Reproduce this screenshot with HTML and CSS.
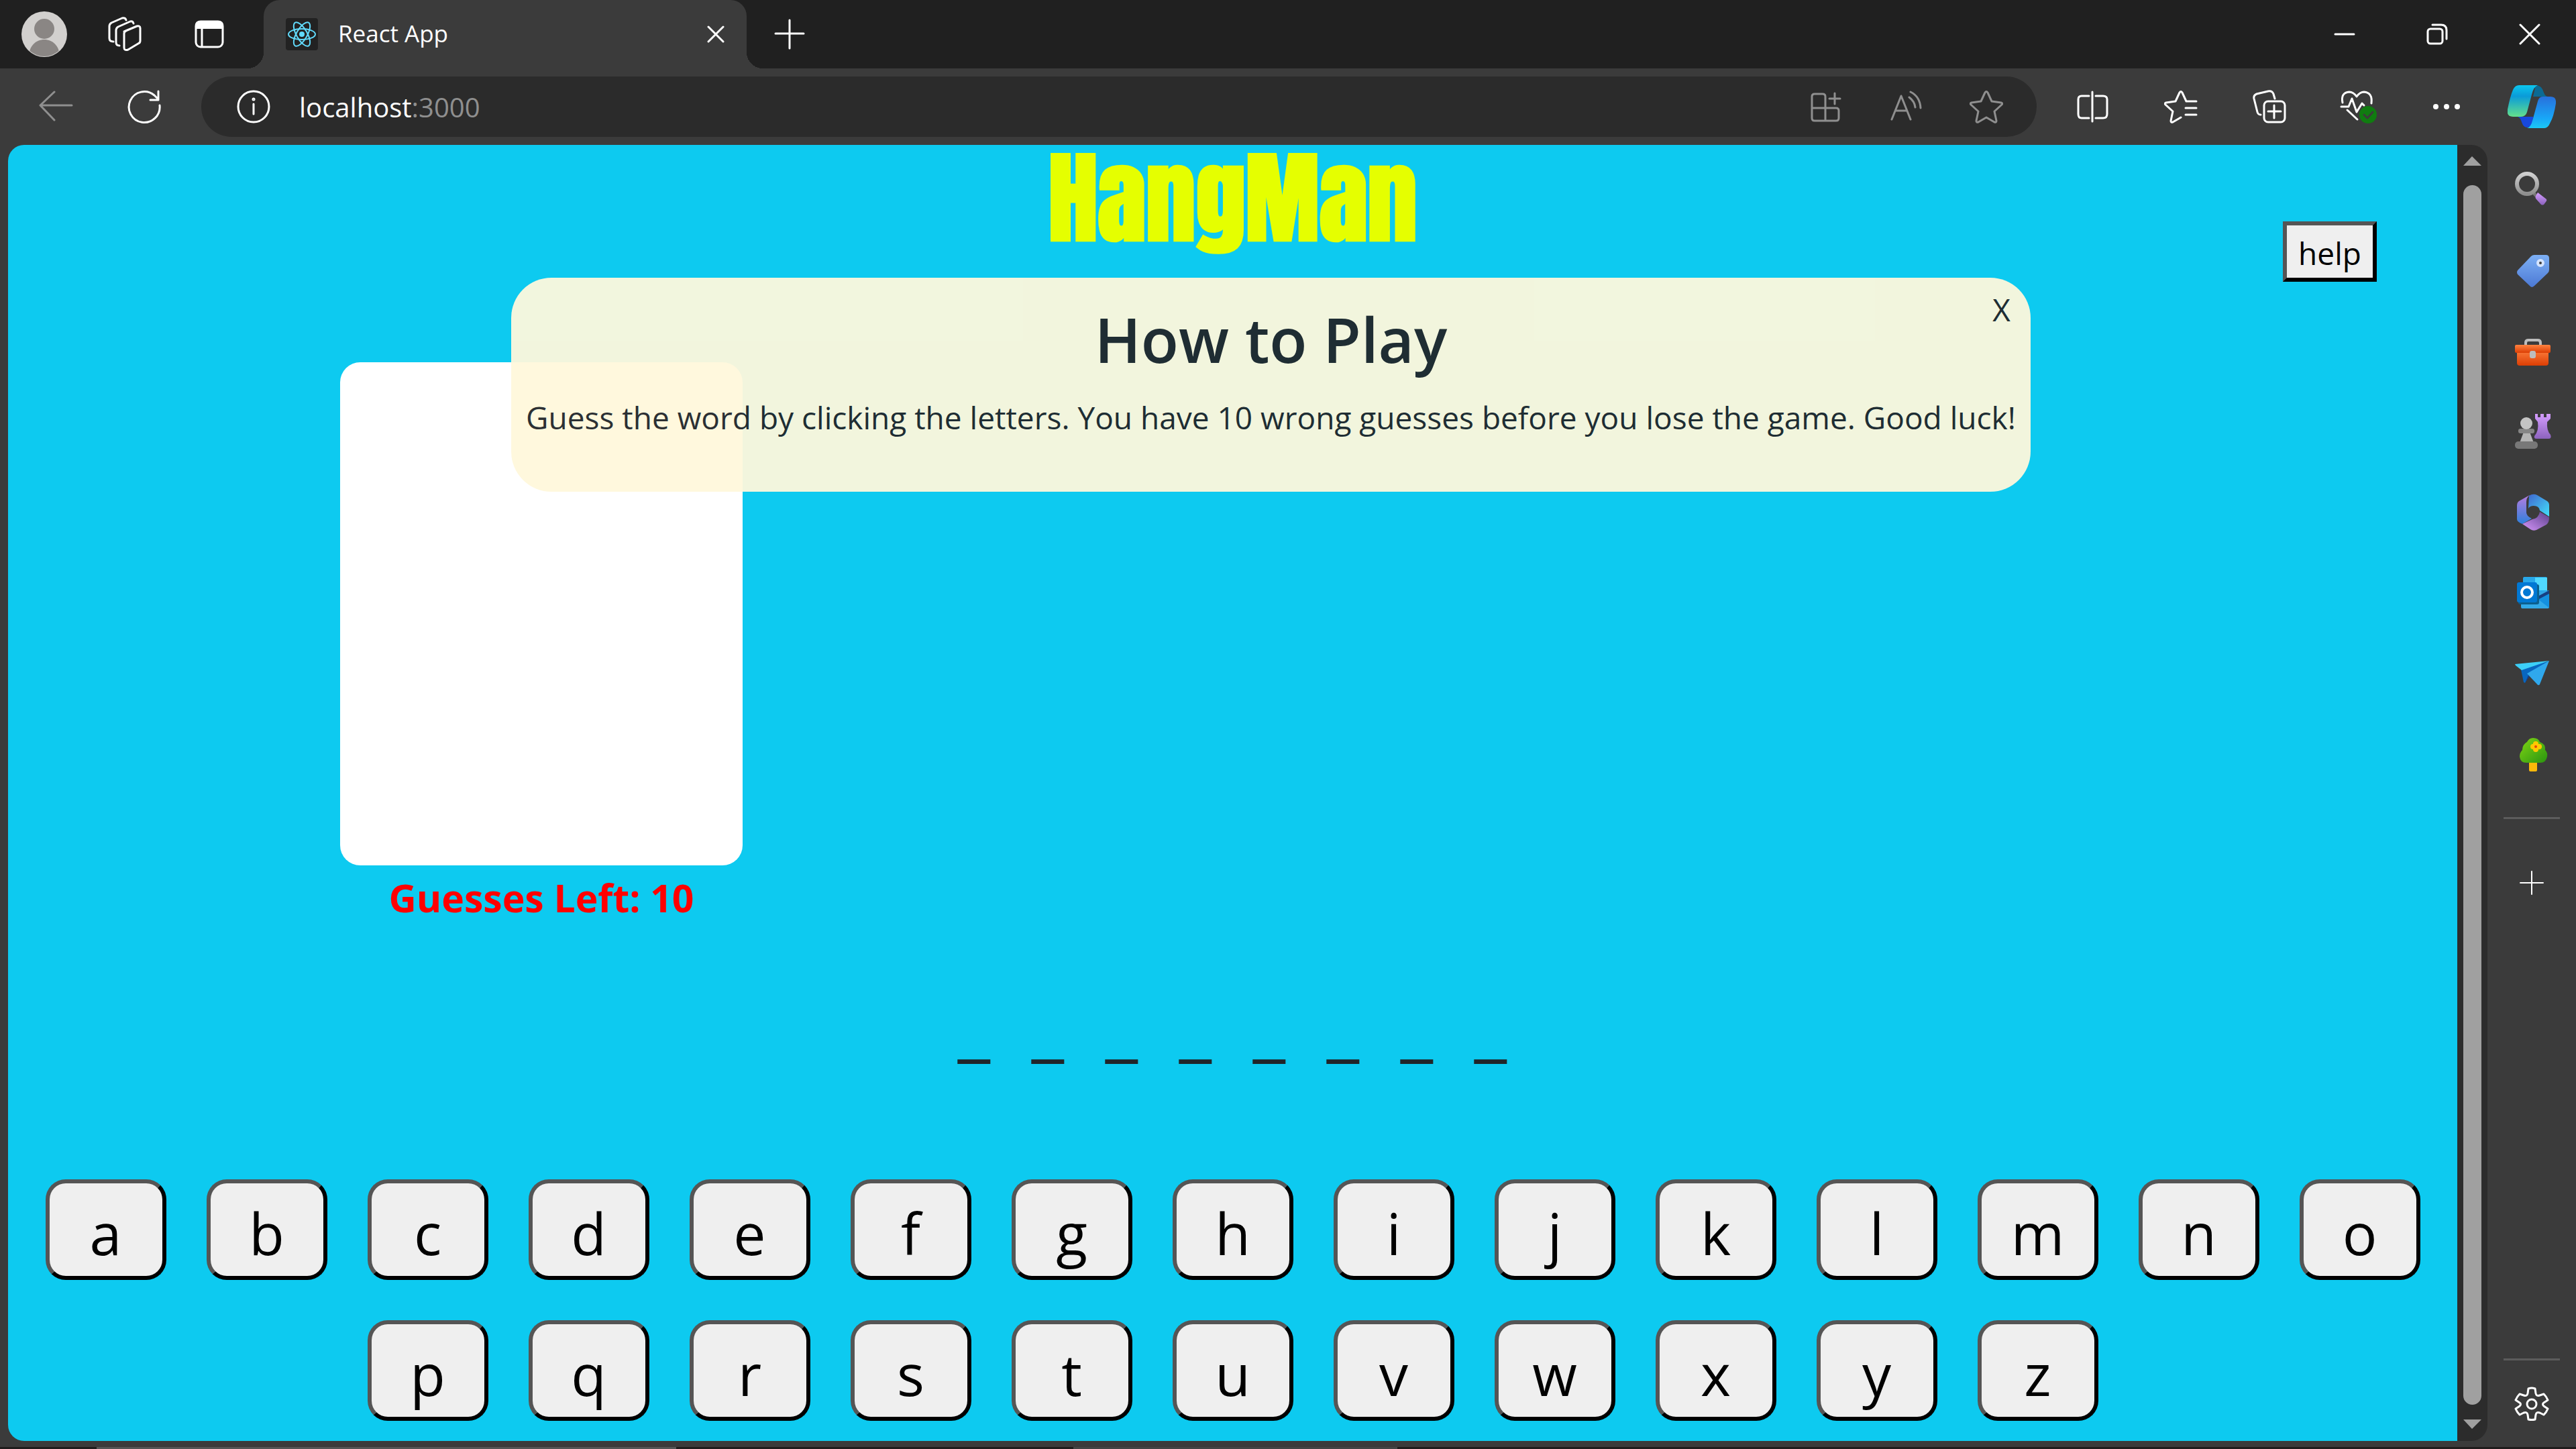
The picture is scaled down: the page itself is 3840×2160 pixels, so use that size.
FILE: index.html
```
<!DOCTYPE html>
<html lang="en">
<head>
<meta charset="utf-8">
<title>React App</title>
<link rel="stylesheet" href="styles.css">
</head>
<body>
<div class="browser">
  <header class="tabstrip">
    <div class="strip-tools">
      <button class="icon-btn" aria-label="Profile">
        <svg width="68" height="68" viewBox="0 0 68 68"><defs><clipPath id="av"><circle cx="34" cy="34" r="33"/></clipPath></defs><circle cx="34" cy="34" r="34" fill="#d2d0ce"/><g clip-path="url(#av)" fill="#8a8684"><circle cx="34" cy="26" r="15"/><path d="M11 68c0-16 10-26 23-26s23 10 23 26z"/></g></svg>
      </button>
      <button class="icon-btn" aria-label="Workspaces">
        <svg class="ic" width="52" height="52" viewBox="0 0 52 52"><path d="M25 22l19-8q5-1 5 3v19q0 3-3 4l-15 9q-6 2-6-3V25q0-3 3-4z"/><path d="M18 43q-5 0-5-5V20q0-3 3-5l18-8q4-1 5 3"/><path d="M9 37q-6 0-6-5V14q0-3 3-5l16-7q5-1 6 3"/></svg>
      </button>
      <button class="icon-btn" aria-label="Tab actions">
        <svg width="48" height="48" viewBox="0 0 48 48"><rect x="4" y="5" width="40" height="38" rx="7" fill="none" stroke="#fff" stroke-width="3"/><path d="M3 16v-5q0-7 7-7h28q7 0 7 7v5z" fill="#fff"/><path d="M13 16v27" stroke="#fff" stroke-width="3"/></svg>
      </button>
    </div>
    <div class="tab">
      <svg width="48" height="48" viewBox="0 0 48 48"><rect width="48" height="48" rx="4" fill="#222"/><g fill="none" stroke="#61dafb" stroke-width="2"><ellipse cx="24" cy="24" rx="20" ry="8"/><ellipse cx="24" cy="24" rx="20" ry="8" transform="rotate(60 24 24)"/><ellipse cx="24" cy="24" rx="20" ry="8" transform="rotate(120 24 24)"/></g><circle cx="24" cy="24" r="4" fill="#61dafb"/></svg>
      <span class="tab-title">React App</span>
      <button class="icon-btn" aria-label="Close tab"><svg class="ic" width="26" height="26" viewBox="0 0 26 26"><path d="M2 2l22 22M24 2L2 24"/></svg></button>
    </div>
    <button class="icon-btn new-tab" aria-label="New tab"><svg class="ic" width="48" height="48" viewBox="0 0 48 48"><path d="M24 3v42M3 23h42"/></svg></button>
    <div class="window-controls">
      <button class="icon-btn" aria-label="Minimize"><svg class="ic" width="32" height="32" viewBox="0 0 32 32"><path d="M2 16h28"/></svg></button>
      <button class="icon-btn" aria-label="Restore"><svg class="ic" width="32" height="32" viewBox="0 0 32 32"><rect x="2" y="8" width="22" height="22" rx="4"/><path d="M9 2h13q8 0 8 8v13"/></svg></button>
      <button class="icon-btn" aria-label="Close"><svg class="ic" width="32" height="32" viewBox="0 0 32 32"><path d="M2 2l28 28M30 2L2 30"/></svg></button>
    </div>
  </header>

  <nav class="toolbar">
    <div class="nav-buttons">
      <button class="icon-btn" aria-label="Back"><svg class="ic dim" width="52" height="48" viewBox="0 0 52 48"><path d="M50 22H3M24 2L3 22l21 22"/></svg></button>
      <button class="icon-btn" aria-label="Refresh"><svg class="ic" width="52" height="52" viewBox="0 0 52 52"><path d="M49 24A23 23 0 1 1 41 9l6 6M47 3v13H35"/></svg></button>
    </div>
    <div class="address">
      <svg class="ic" width="50" height="50" viewBox="0 0 50 50"><circle cx="25" cy="25" r="23"/><path d="M25 21v15"/><circle cx="25" cy="14" r="1"/></svg>
      <span class="url">localhost<span class="port">:3000</span></span>
      <div class="address-actions">
        <button class="icon-btn" aria-label="Apps"><svg class="ic dim" width="48" height="48" viewBox="0 0 48 48"><path d="M8 5h12q4 0 4 4v36M4 26h36q4 0 4 4v11q0 4-4 4H8q-4 0-4-4V9q0-4 4-4M38 4v16M30 12h16"/></svg></button>
        <button class="icon-btn" aria-label="Read aloud"><svg class="ic dim" width="48" height="48" viewBox="0 0 48 48"><path d="M3 43L17 8l14 35M9 30h16M29 10q8 6 9 15M31 2q14 7 15 24"/></svg></button>
        <button class="icon-btn" aria-label="Favorite"><svg class="ic dim" width="50" height="50" viewBox="0 0 50 50"><path d="M23 4q2-3 4 0l6 13 14 2q3 1 1 3L37 32l3 14q0 3-3 2l-12-7-12 7q-3 1-3-2l3-14L2 22q-2-2 1-3l14-2z"/></svg></button>
      </div>
    </div>
    <div class="toolbar-actions">
      <button class="icon-btn" aria-label="Split screen"><svg class="ic" width="48" height="48" viewBox="0 0 48 48"><path d="M24 2v44M19 8H8q-5 0-5 5v22q0 6 5 6h11M29 8h11q6 0 6 5v22q0 6-6 6H29"/></svg></button>
      <button class="icon-btn" aria-label="Favorites"><svg class="ic" width="50" height="50" viewBox="0 0 50 50"><path d="M33 17l-6-13q-2-3-4 0l-6 13-14 2q-3 1-1 3l11 10-3 14q0 3 3 2l12-7M33 17h15M32 27h16M32 37h16"/></svg></button>
      <button class="icon-btn" aria-label="Collections"><svg class="ic" width="50" height="50" viewBox="0 0 50 50"><path d="M12 37q-4 0-5-4L2 13q-1-5 4-7l17-4q6-1 8 4l2 7"/><rect x="17" y="17" width="31" height="31" rx="6"/><path d="M32 23v19M23 32h19"/></svg></button>
      <button class="icon-btn" aria-label="Browser essentials"><svg class="ic" width="56" height="50" viewBox="0 0 56 50"><path d="M5 19Q2 4 15 3q6 0 11 7 5-7 11-7 13 1 11 17M3 25h11l5-12 7 20 8-13 3 3M12 30l15 14"/><circle cx="43" cy="37" r="13" fill="#107c10" stroke="none"/><path d="M37 37l5 5 8-9" stroke="#3b3b3b"/></svg></button>
      <button class="icon-btn" aria-label="Settings and more"><svg width="48" height="48" viewBox="0 0 48 48" fill="#fff"><circle cx="8" cy="24" r="4"/><circle cx="24" cy="24" r="4"/><circle cx="40" cy="24" r="4"/></svg></button>
      <button class="icon-btn" aria-label="Copilot"><svg width="72" height="64" viewBox="0 0 72 64"><defs><linearGradient id="cg" x1="0" y1="0" x2="0" y2="1"><stop offset="0" stop-color="#0bc6ee"/><stop offset=".35" stop-color="#0a9bd8"/><stop offset="1" stop-color="#63e08c"/></linearGradient><linearGradient id="cb" x1="0" y1="0" x2="0" y2="1"><stop offset="0" stop-color="#2870dc"/><stop offset=".7" stop-color="#18a8f8"/><stop offset="1" stop-color="#1cc8f4"/></linearGradient></defs><path d="M42 0q9 0 12 11 2 6 7 6H38z" fill="#0b6a94"/><path d="M15 47q4 1 6 8 3 9 9 8 8-2 8-16z" fill="#1748dc"/><path d="M17 0h28q-6 2-9 14l-7 26q-2 7-9 7H8q-10 0-8-11Q4 16 8 7q3-7 9-7z" fill="url(#cg)"/><path d="M52 17h12q9 0 8 10-3 20-9 30-3 7-8 7H29q6-2 8-11l8-29q2-7 7-7z" fill="url(#cb)"/></svg></button>
    </div>
  </nav>

  <div class="content">
    <main class="page">
      <header class="game-header">
        <h1 class="title">HangMan</h1>
        <button class="help">help</button>
      </header>
      <figure class="gallows">
        <div class="board"></div>
        <figcaption class="guesses">Guesses Left: 10</figcaption>
      </figure>
      <div class="word"><span>_</span><span>_</span><span>_</span><span>_</span><span>_</span><span>_</span><span>_</span><span>_</span></div>
      <div class="keyboard">
        <button class="key">a</button><button class="key">b</button><button class="key">c</button><button class="key">d</button><button class="key">e</button><button class="key">f</button><button class="key">g</button><button class="key">h</button><button class="key">i</button><button class="key">j</button><button class="key">k</button><button class="key">l</button><button class="key">m</button><button class="key">n</button><button class="key">o</button><button class="key">p</button><button class="key">q</button><button class="key">r</button><button class="key">s</button><button class="key">t</button><button class="key">u</button><button class="key">v</button><button class="key">w</button><button class="key">x</button><button class="key">y</button><button class="key">z</button>
      </div>
      <section class="modal" role="dialog" aria-labelledby="how">
        <button class="modal-close" aria-label="X">X</button>
        <h2 class="modal-title" id="how">How to Play</h2>
        <p class="modal-text">Guess the word by clicking the letters. You have 10 wrong guesses before you lose the game. Good luck!</p>
      </section>
    </main>
    <div class="scrollbar">
      <svg width="27" height="14" viewBox="0 0 27 14"><path d="M0 14L13 0l14 14z" fill="#a0a0a0"/></svg>
      <div class="thumb"></div>
      <svg width="27" height="14" viewBox="0 0 27 14"><path d="M0 0h27L13 14z" fill="#a0a0a0"/></svg>
    </div>
    <aside class="sidebar">
      <button class="icon-btn" aria-label="Search"><svg width="60" height="60" viewBox="0 0 60 60"><defs><linearGradient id="pu" x1="0" y1="0" x2="0" y2="1"><stop offset="0" stop-color="#d59dff"/><stop offset="1" stop-color="#8c63bd"/></linearGradient><linearGradient id="gr" x1="0" y1="0" x2="0" y2="1"><stop offset="0" stop-color="#d0d0d0"/><stop offset="1" stop-color="#8e8e8e"/></linearGradient></defs><path d="M33 34l5 5" stroke="#777" stroke-width="5"/><circle cx="23" cy="20" r="15" fill="none" stroke="url(#gr)" stroke-width="6"/><path d="M39 33l13 10q1 2-1 4l-3 4q-2 1-4 0L36 42q-1-2 0-4z" fill="url(#pu)"/></svg></button>
      <button class="icon-btn" aria-label="Shopping"><svg width="60" height="60" viewBox="0 0 60 60"><defs><linearGradient id="bl" x1="0" y1="0" x2="0" y2="1"><stop offset="0" stop-color="#7db0f5"/><stop offset="1" stop-color="#4c79d4"/></linearGradient></defs><path d="M34 6h17q5 0 5 5v17q0 3-2 5L34 52q-4 4-7 0L9 35q-2-3 0-6L29 8q2-2 5-2z" fill="url(#bl)"/><circle cx="43" cy="18" r="4" fill="#3b3b3b" stroke="#d5e4ff" stroke-width="4"/></svg></button>
      <button class="icon-btn" aria-label="Tools"><svg width="60" height="60" viewBox="0 0 60 60"><defs><linearGradient id="or" x1="0" y1="0" x2="0" y2="1"><stop offset="0" stop-color="#ff8240"/><stop offset="1" stop-color="#dc3e04"/></linearGradient></defs><path d="M21 22v-5q0-4 4-4h14q4 0 4 4v5" fill="none" stroke="#bdbdbd" stroke-width="4"/><rect x="8" y="26" width="47" height="25" rx="4" fill="url(#or)"/><rect x="5" y="20" width="53" height="12" rx="2" fill="url(#or)"/><rect x="27" y="29" width="9" height="11" rx="3" fill="#bdbdbd"/></svg></button>
      <button class="icon-btn" aria-label="Games"><svg width="60" height="60" viewBox="0 0 60 60"><path d="M35 3h4v5h4V3h5v5h4V3h6v7l-5 5q-1 13 5 19 2 6-3 6H37q-4 0-3-4 7-8 5-21l-4-5z" fill="url(#pu)"/><path d="M18 30h9l6 16H12z" fill="#b4b4b4"/><rect x="10" y="25" width="24" height="7" rx="3" fill="#858585"/><circle cx="22" cy="17" r="9" fill="#c4c4c4"/><rect x="5" y="44" width="34" height="11" rx="5" fill="#787878"/></svg></button>
      <button class="icon-btn" aria-label="Microsoft 365"><svg width="60" height="60" viewBox="0 0 60 60"><defs><linearGradient id="ma" x1="0" y1="0" x2="0" y2="1"><stop offset="0" stop-color="#b67ce0"/><stop offset="1" stop-color="#2e80dc"/></linearGradient><linearGradient id="mb" x1="0" y1="0" x2="1" y2="1"><stop offset="0" stop-color="#3f68d0"/><stop offset="1" stop-color="#43e0fa"/></linearGradient><linearGradient id="mc" x1="0" y1="1" x2="1" y2="0"><stop offset="0" stop-color="#d796fa"/><stop offset="1" stop-color="#593f8a"/></linearGradient></defs><path d="M26 5q6-4 12-1l15 9q3 2 3 6v17L42 27q-1-7-9-7-6 0-8 4z" fill="url(#mb)"/><path d="M27 4L11 13q-3 2-3 7v20q0 4 8 7l14-8q-8-4-8-9V14q0-6 5-10z" fill="url(#ma)"/><path d="M16 47l15-7q9-1 11-11l14 8q0 8-4 11L37 56q-5 2-9-1z" fill="url(#mc)"/></svg></button>
      <button class="icon-btn" aria-label="Outlook"><svg width="60" height="60" viewBox="0 0 60 60"><rect x="17" y="6" width="36" height="30" rx="2" fill="#28a8ea"/><path d="M35 7h18v19H35z" fill="#50d9ff"/><path d="M14 34l42-8v25q0 2-2 2H16q-2 0-2-2z" fill="#32a9e8"/><path d="M56 26v26L39 39z" fill="#1490df"/><path d="M56 26v5L39 40v-5z" fill="#173f82"/><rect x="10" y="17" width="31" height="30" rx="3" fill="#0b5f8f"/><rect x="8" y="14" width="30" height="30" rx="3" fill="#0078d4"/><circle cx="23" cy="29" r="8" fill="none" stroke="#fff" stroke-width="4"/></svg></button>
      <button class="icon-btn" aria-label="Drop"><svg width="60" height="60" viewBox="0 0 60 60"><path d="M17 25l3 19 9-13z" fill="#163f8c"/><path d="M14 24L56 11 26 30l-6 14-2-1z" fill="#0866c0"/><path d="M5 16l51-5L15 25 6 18z" fill="#3ccff8"/><path d="M56 11L42 46q-1 2-3 1L23 30z" fill="#2fa8ed"/></svg></button>
      <button class="icon-btn" aria-label="Tree"><svg width="60" height="60" viewBox="0 0 60 60"><defs><linearGradient id="tr" x1="0" y1="0" x2="1" y2="1"><stop offset="0" stop-color="#80d614"/><stop offset="1" stop-color="#2a9410"/></linearGradient></defs><rect x="26" y="40" width="12" height="16" rx="2" fill="#fcb90a"/><path d="M32 6q8 0 10 6 9 3 8 12 4 4 3 10-2 9-10 9H22q-9 0-10-9 0-6 4-10 0-8 7-12 3-6 9-6z" fill="url(#tr)"/><g fill="#ffc800"><circle cx="36" cy="15" r="4"/><circle cx="36" cy="23" r="4"/><circle cx="32" cy="19" r="4"/><circle cx="41" cy="19" r="4"/></g><circle cx="36" cy="19" r="2" fill="#e3470b"/></svg></button>
      <hr class="divider divider-top">
      <button class="icon-btn add" aria-label="Add"><svg class="ic" width="36" height="36" viewBox="0 0 36 36"><path d="M18 1v34M1 18h34" stroke-width="2"/></svg></button>
      <hr class="divider divider-bottom">
      <button class="icon-btn settings" aria-label="Settings"><svg class="ic" width="52" height="52" viewBox="0 0 52 52"><path d="M21 3q5-2 10 0l1 7q1 5 6 3l6-2q4 4 6 9l-6 4q-3 2 0 5l6 4q-2 5-6 9l-6-3q-5-2-6 3l-1 7q-5 1-10 0l-1-7q-1-5-6-3l-6 3q-4-4-6-9l6-4q3-3 0-5l-6-4q2-5 6-9l6 2q5 2 6-3z"/><circle cx="26" cy="26" r="7"/></svg></button>
    </aside>
  </div>
  <footer class="taskbar-edge"><span></span><span></span></footer>
</div>
</body>
</html>
```

FILE: styles.css
```
* { box-sizing: border-box; }

body {
  margin: 0;
  font-family: "Segoe UI", "Open Sans", "Noto Sans", sans-serif;
  background: #3b3b3b;
}

button { font: inherit; cursor: pointer; }
svg { display: block; flex: none; }

.browser {
  display: flex;
  flex-direction: column;
  min-height: 100vh;
}

.icon-btn {
  display: flex;
  align-items: center;
  justify-content: center;
  padding: 0;
  border: 0;
  background: none;
}

.ic {
  fill: none;
  stroke: #fff;
  stroke-width: 3;
  stroke-linecap: round;
  stroke-linejoin: round;
}
.dim { stroke: #8f8f8f; }

/* Tab strip */
.tabstrip {
  display: flex;
  height: 102px;
  background: #202020;
  color: #fff;
}
.strip-tools {
  display: grid;
  grid-template-columns: 120px 120px 132px;
  padding-left: 6px;
  margin-right: 15px;
}
.tab {
  position: relative;
  display: flex;
  align-items: center;
  width: 720px;
  padding: 0 33px;
  gap: 30px;
  border-radius: 24px 24px 0 0;
  background: #3b3b3b;
}
.tab::before,
.tab::after {
  content: "";
  position: absolute;
  bottom: 0;
  width: 24px;
  height: 24px;
}
.tab::before {
  right: 100%;
  background: radial-gradient(circle at 0 0, #202020 24px, #3b3b3b 24px);
}
.tab::after {
  left: 100%;
  background: radial-gradient(circle at 100% 0, #202020 24px, #3b3b3b 24px);
}
.tab-title { flex: 1; font-size: 35px; line-height: 48px; padding-bottom: 2px; }
.new-tab { margin-left: 40px; }
.window-controls { display: flex; margin-left: auto; }
.window-controls .icon-btn { width: 138px; }

/* Toolbar */
.toolbar {
  display: flex;
  height: 114px;
  padding: 12px 5px 12px 17px;
}
.nav-buttons { display: flex; margin-right: 19px; }
.nav-buttons .icon-btn,
.toolbar-actions .icon-btn { width: 132px; }
.address {
  display: flex;
  flex: 1;
  align-items: center;
  padding: 0 15px 0 53px;
  border-radius: 45px;
  background: #2b2b2b;
}
.url { flex: 1; margin-left: 43px; font-size: 40px; color: #fff; }
.port { color: #8f8f8f; }
.address-actions { display: flex; }
.address-actions .icon-btn { width: 120px; }
.toolbar-actions { display: flex; margin-left: 17px; }
.toolbar-actions .icon-btn:last-child { width: 122px; }

/* Content row */
.content { display: flex; flex: 1; }
.page {
  position: relative;
  flex: 1;
  margin: 0 0 9px 12px;
  padding-bottom: 30px;
  border-radius: 24px 0 0 24px;
  background: #0dcaf0;
  color: #212529;
}
.scrollbar {
  display: flex;
  flex-direction: column;
  align-items: center;
  width: 45px;
  margin-bottom: 9px;
  padding: 17px 0 18px;
  border-radius: 0 24px 24px 0;
  background: #2c2c2c;
}
.thumb {
  flex: 1;
  width: 27px;
  margin: 29px 0 22px;
  border-radius: 14px;
  background: #a0a0a0;
}

/* Game */
.game-header {
  display: grid;
  grid-template-columns: 1fr auto 1fr;
  align-items: start;
}
.title {
  grid-column: 2;
  margin: 0;
  font: bold 148px/160px Impact, Anton, "Roboto Condensed", sans-serif;
  color: #e5ff00;
}
.help,
.key {
  padding: 0;
  border: 6px solid;
  border-color: #555 #000 #000 #555;
  background: #efefef;
  color: #000;
}
.help {
  justify-self: end;
  width: 140px;
  height: 90px;
  margin: 114px 120px 0 0;
  padding-top: 4px;
  font-size: 46px;
}
.gallows { width: 600px; margin: 120px 0 0 495px; }
.board { height: 750px; border-radius: 30px; background: #fff; }
.guesses {
  font-size: 57px;
  font-weight: 700;
  line-height: 96px;
  text-align: center;
  color: #f00;
}
.word {
  display: flex;
  justify-content: center;
  gap: 60px;
  margin-top: 80px;
  font-size: 111px;
  line-height: 120px;
}
.word span { width: 50px; }
.keyboard {
  display: flex;
  flex-wrap: wrap;
  justify-content: center;
  gap: 60px;
  margin-top: 172px;
  padding: 0 30px;
}
.key {
  width: 180px;
  height: 150px;
  padding-top: 10px;
  border-radius: 30px;
  font-size: 86px;
  line-height: 120px;
}

/* Help dialog */
.modal {
  position: absolute;
  top: 198px;
  left: 750px;
  padding: 34px 22px 75px;
  border-radius: 60px;
  background: cornsilk;
  opacity: .95;
  text-align: center;
  white-space: nowrap;
}
.modal-title { margin: 0 0 22px; font-size: 92px; font-weight: 600; line-height: 116px; }
.modal-text { margin: 0; font-size: 46px; line-height: 72px; }
.modal-close {
  position: absolute;
  top: 11px;
  right: 30px;
  padding: 0;
  border: 0;
  background: none;
  font-size: 46px;
  line-height: 72px;
  color: inherit;
}

/* Sidebar */
.sidebar {
  display: flex;
  flex-direction: column;
  align-items: center;
  width: 132px;
  padding-top: 8px;
}
.sidebar .icon-btn { width: 132px; height: 120px; }
.divider { width: 84px; height: 3px; margin: 0; border: 0; background: #5c5c5c; }
.divider-top { margin-top: 34px; }
.divider-bottom { margin-top: auto; }
.sidebar .add { height: 190px; }
.sidebar .settings { height: 129px; }

.taskbar-edge {
  display: flex;
  gap: 592px;
  height: 3px;
  padding-left: 144px;
  background: #1f1c1c;
}
.taskbar-edge span { width: 864px; background: #555; }
.taskbar-edge span + span { width: 483px; background: #444; }
```
